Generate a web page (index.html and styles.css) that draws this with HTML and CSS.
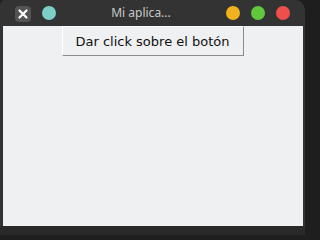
FILE: index.html
```html
<!DOCTYPE html>
<html>
<head>
<meta charset="utf-8">
<link rel="stylesheet" href="styles.css">
</head>
<body>
<div class="window">
  <div class="titlebar">
    <div class="left-ctrls">
      <span class="close-btn">
        <svg width="16" height="16" viewBox="0 0 16 16"><path d="M4.5 4.5 L11.5 11.5 M11.5 4.5 L4.5 11.5" stroke="#ffffff" stroke-width="2.2" stroke-linecap="round"/></svg>
      </span>
      <span class="dot teal"></span>
    </div>
    <div class="title">Mi aplica...</div>
    <div class="right-ctrls">
      <span class="dot orange"></span>
      <span class="dot green"></span>
      <span class="dot red"></span>
    </div>
  </div>
  <div class="content">
    <button class="tk-btn">Dar click sobre el botón</button>
  </div>
  <div class="bottom"></div>
</div>
</body>
</html>
```
FILE: styles.css
```css
html, body {
  margin: 0;
  padding: 0;
  background: #1e1e1e;
}
.window {
  width: 305px;
  height: 235px;
  background: #333333;
  border-radius: 5px 10px 0 0;
  display: flex;
  flex-direction: column;
  overflow: hidden;
}
.titlebar {
  height: 26px;
  display: flex;
  align-items: center;
  flex: none;
}
.left-ctrls {
  display: flex;
  align-items: center;
  padding-left: 15px;
  gap: 11px;
}
.close-btn {
  width: 16px;
  height: 16px;
  border-radius: 4px;
  background: #545454;
  display: flex;
  align-items: center;
  justify-content: center;
  margin-top: 1px;
}
.dot {
  width: 14px;
  height: 14px;
  border-radius: 50%;
  display: block;
}
.teal { background: #7ccfc7; }
.orange { background: #f2b11e; }
.green { background: #5ec73c; }
.red { background: #ee4f4a; }
.title {
  flex: 1;
  text-align: center;
  font-family: "Noto Sans", sans-serif;
  font-size: 12px;
  color: #c8c8c8;
  padding-bottom: 1px;
}
.right-ctrls {
  display: flex;
  align-items: center;
  gap: 11px;
  padding-right: 15px;
}
.content {
  flex: none;
  height: 200px;
  margin: 0 2px 0 3px;
  background: #eff0f1;
  display: flex;
  justify-content: center;
  align-items: flex-start;
}
.tk-btn {
  margin: 0 0 0 -1px;
  width: 182px;
  height: 30px;
  padding: 0;
  background: #eff0f1;
  border: 1px solid;
  border-color: #ffffff #8c8c8c #8c8c8c #ffffff;
  font-family: "DejaVu Sans", sans-serif;
  font-size: 13px;
  color: #111111;
  border-radius: 0;
}
.bottom {
  flex: 1;
  background: #292929;
}
```
